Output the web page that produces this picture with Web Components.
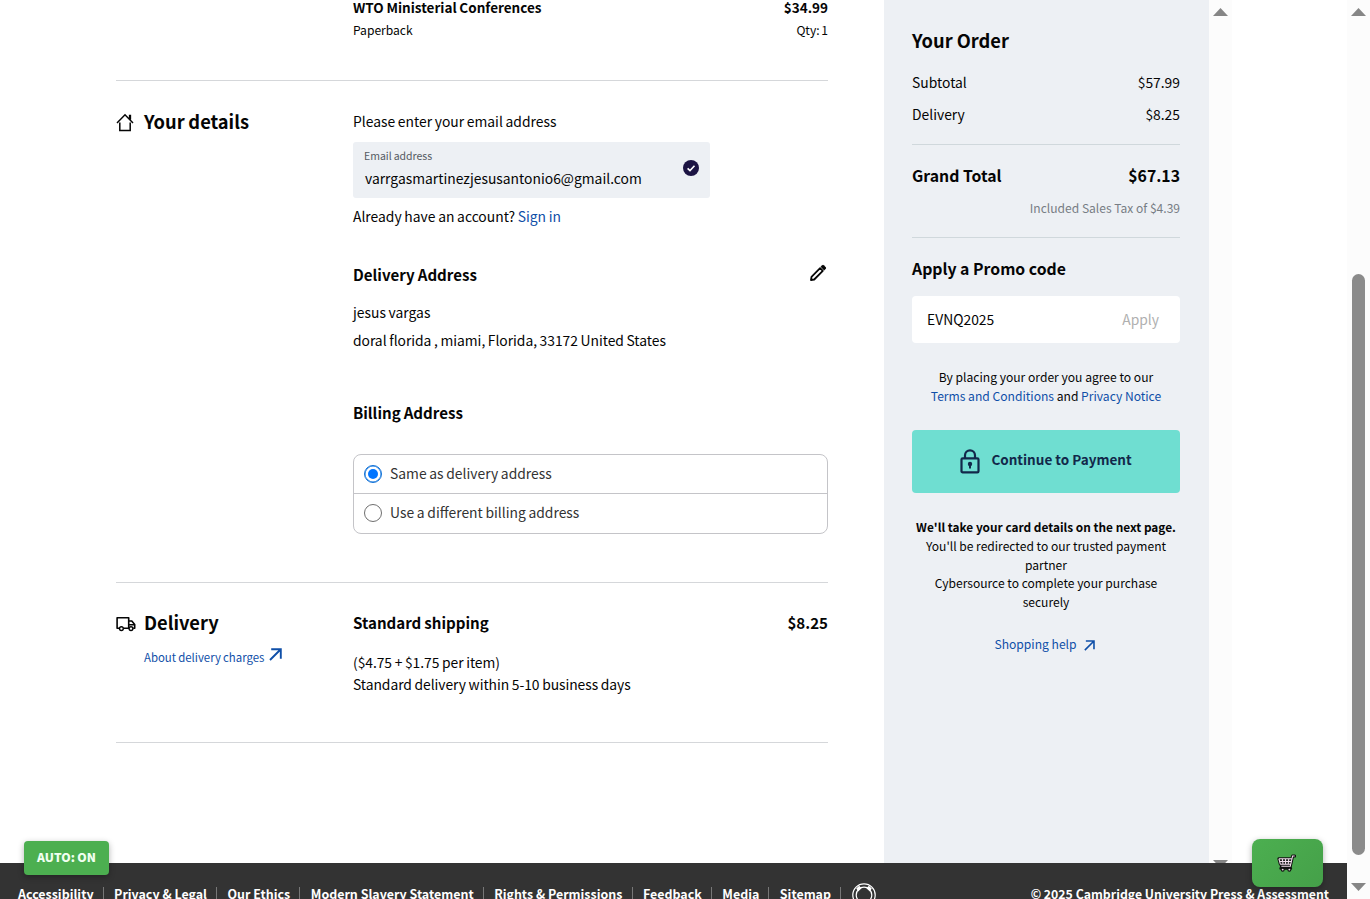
<!DOCTYPE html>
<html lang="en">
<head>
<meta charset="utf-8">
<title>Checkout</title>
<style>
  html, body { margin: 0; height: 100%; overflow: hidden; }
  body {
    background: #fff;
    color: #050505;
    font-family: "Noto Sans CJK SC", "Open Sans", sans-serif;
    font-size: 13.87px;
    font-weight: 400;
    word-spacing: -0.4px;
  }
</style>
</head>
<body>
<checkout-page></checkout-page>

<script>
const ICONS = {
  home: ['0 0 18 19', `<path d="M1 10 9 1.8 17 10M3.8 9.5v8h10.4v-8M13.6 6V2.6h.8v4" fill="none" stroke="currentColor" stroke-width="1.5"/>`],
  truck: ['0 0 20 16', `<path d="M3.6 12.3H1.1V1.7h11.6v10.6H7.4M12.7 5h3.1l2.9 3.6v3.7h-1.5M12.7 8.8h6" fill="none" stroke="currentColor" stroke-width="1.6" stroke-linejoin="round"/><circle cx="5.4" cy="12.6" r="1.9" fill="#fff" stroke="currentColor" stroke-width="1.4"/><circle cx="15" cy="12.6" r="1.9" fill="#fff" stroke="currentColor" stroke-width="1.4"/>`],
  check: ['0 0 16 16', `<circle cx="8" cy="8" r="8" fill="#1c1443"/><path d="M4.6 8.3 7 10.6 11.5 5.8" fill="none" stroke="#fff" stroke-width="1.6"/>`],
  pencil: ['0 0 18 18', `<path d="M2 16l.5-3.2 8.6-8.6 2.7 2.7-8.6 8.6z" fill="none" stroke="currentColor" stroke-width="1.8" stroke-linejoin="round"/><path d="M11.6 2.8 13.2 1.2q.8-.7 1.6 0l2 2q.7.8 0 1.6l-1.6 1.6z" fill="currentColor"/>`],
  arrow: ['0 0 13 13', `<path d="M1 12 11.5 1.5M2.2 1.2h9.6v9.6" fill="none" stroke="currentColor" stroke-width="1.9"/>`],
  lock: ['0 0 20 25', `<rect x="1.5" y="9.4" width="17" height="14" rx="1.2" fill="none" stroke="currentColor" stroke-width="2.2"/><path d="M5 9.2V6.4a5 5 0 0 1 10 0v2.8" fill="none" stroke="currentColor" stroke-width="2.2"/><circle cx="10" cy="15" r="2.2" fill="currentColor"/><path d="M10 15v4.4" stroke="currentColor" stroke-width="2"/>`],
  ring: ['0 0 24 24', `<circle cx="12" cy="12" r="11.2" fill="none" stroke="currentColor" stroke-width="1.2"/><circle cx="12" cy="12" r="7.8" fill="none" stroke="currentColor" stroke-width="1.2"/><path d="M4.2 5.6l3-2.8 2.4 2.4-3.4 3.3zM19.8 5.6l-3-2.8-2.4 2.4 3.4 3.3z" fill="currentColor"/>`],
  cart: ['0 0 20 20', `<path d="M18.6 2.2h-2.2L14 13H4.6M2 5h13.6l-1.4 6H3.6zM4 15h10.4" fill="none" stroke="#111" stroke-width="3.2" stroke-linejoin="round" stroke-linecap="round"/><circle cx="6" cy="16.6" r="2.1" fill="#111"/><circle cx="13" cy="16.6" r="2.1" fill="#111"/><path d="M2 5h13.6l-1.4 6H3.6z" fill="#222"/><path d="M18.6 2.2h-2.2L14 13H4.6M2 5h13.6M2.8 8h12M3.6 10.8h10.6M5.6 5l.8 6M9 5v6M12.4 5l-.6 6M2 5l1.6 6" fill="none" stroke="#efdcea" stroke-width="1.1"/><circle cx="6" cy="16.4" r="1" fill="#efdcea"/><circle cx="13" cy="16.4" r="1" fill="#efdcea"/>`],
};

class UiIcon extends HTMLElement {
  constructor() {
    super();
    this.attachShadow({ mode: "open" });
  }
  connectedCallback() {
    const [box, body] = ICONS[this.getAttribute("name")];
    this.shadowRoot.innerHTML = `
      <style>
        :host { display: block; flex: none; }
        svg { display: block; width: 100%; height: 100%; }
      </style>
      <svg viewBox="${box}">${body}</svg>`;
  }
}
customElements.define("ui-icon", UiIcon);

// One band of the checkout: heading on the left, content on the right
class CheckoutSection extends HTMLElement {
  constructor() {
    super();
    this.attachShadow({ mode: "open" });
    this.shadowRoot.innerHTML = `
      <style>
        :host {
          display: grid;
          grid-template-columns: 237px 1fr;
          border-bottom: 1px solid #d5d7da;
          box-sizing: border-box;
        }
        .body { min-width: 0; }
      </style>
      <div><slot name="heading"></slot></div>
      <div class="body"><slot></slot></div>`;
  }
}
customElements.define("checkout-section", CheckoutSection);

class SectionHeading extends HTMLElement {
  constructor() {
    super();
    this.attachShadow({ mode: "open" });
  }
  connectedCallback() {
    this.shadowRoot.innerHTML = `
      <style>
        :host { display: block; }
        .row { display: flex; align-items: center; height: 24px; }
        h2 { margin: 0; font-size: 18.3px; line-height: 24px; font-weight: 700; }
        .icon { width: 28px; height: 24px; display: flex; align-items: center; }
        .home { width: 18px; height: 19px; margin: 2px 0 0 0; }
        .truck { width: 20px; height: 16px; margin: 3px 0 0 0; }
      </style>
      <div class="row">
        <div class="icon"><ui-icon class="${this.getAttribute("icon")}" name="${this.getAttribute("icon")}"></ui-icon></div>
        <h2>${this.getAttribute("label")}</h2>
      </div>
      <slot></slot>`;
  }
}
customElements.define("section-heading", SectionHeading);

class EmailField extends HTMLElement {
  constructor() {
    super();
    this.attachShadow({ mode: "open" });
  }
  connectedCallback() {
    this.shadowRoot.innerHTML = `
      <style>
        :host {
          display: flex;
          justify-content: space-between;
          box-sizing: border-box;
          width: 357px;
          height: 56px;
          padding: 5px 11px 0 11px;
          border-radius: 3px;
          background: #edf0f4;
        }
        .label { font-size: 10.5px; line-height: 18px; color: #555b63; }
        .value { line-height: 24px; margin: 1px 0 0 1px; }
        ui-icon { width: 16px; height: 16px; margin-top: 13px; }
      </style>
      <div>
        <div class="label">${this.getAttribute("label")}</div>
        <div class="value">${this.getAttribute("value")}</div>
      </div>
      <ui-icon name="check"></ui-icon>`;
  }
}
customElements.define("email-field", EmailField);

class RadioOption extends HTMLElement {
  constructor() {
    super();
    this.attachShadow({ mode: "open" });
    this.shadowRoot.innerHTML = `
      <style>
        :host {
          display: flex;
          align-items: center;
          gap: 8px;
          height: 38px;
          padding-left: 10px;
          color: #333;
        }
        .dot {
          box-sizing: border-box;
          width: 18px;
          height: 18px;
          border: 1px solid #6f6f6f;
          border-radius: 50%;
          display: grid;
          place-items: center;
        }
        :host([checked]) .dot { border: 1px solid #0b6fd8; box-shadow: inset 0 0 0 .5px #0b6fd8; }
        :host([checked]) .dot::after {
          content: "";
          width: 10px;
          height: 10px;
          border-radius: 50%;
          background: #0075ff;
        }
        .text { line-height: 22px; margin-top: -2px; }
      </style>
      <span class="dot"></span>
      <span class="text"><slot></slot></span>`;
  }
}
customElements.define("radio-option", RadioOption);

class PriceRow extends HTMLElement {
  constructor() {
    super();
    this.attachShadow({ mode: "open" });
  }
  connectedCallback() {
    this.shadowRoot.innerHTML = `
      <style>
        :host { display: flex; justify-content: space-between; line-height: 24px; white-space: nowrap; }
      </style>
      <span>${this.getAttribute("label")}</span>
      <span>${this.getAttribute("value")}</span>`;
  }
}
customElements.define("price-row", PriceRow);

class OrderSummary extends HTMLElement {
  constructor() {
    super();
    this.attachShadow({ mode: "open" });
    this.shadowRoot.innerHTML = `
      <style>
        :host {
          display: block;
          box-sizing: border-box;
          padding: 26px 29px 0 28px;
          background: #edf0f4;
          word-spacing: 0;
        }
        h2 { margin: 0 0 16px; font-size: 18.3px; line-height: 28px; font-weight: 700; }
        h3 { margin: 19px 0 15px; font-size: 15.8px; line-height: 24px; font-weight: 700; }
        a { color: #0f4fa8; text-decoration: none; }
        hr { margin: 18px 0 0; border: 0; height: 1px; background: #d0d8dc; }
        .delivery { margin-top: 8px; }
        .total { margin-top: 19px; font-size: 15.8px; font-weight: 700; }
        .tax { margin: 10px 0 19px; font-size: 12.05px; line-height: 20px; text-align: right; color: #777d84; }
        .promo {
          display: flex;
          justify-content: space-between;
          align-items: center;
          box-sizing: border-box;
          height: 47px;
          padding: 0 21px 2px 15px;
          border-radius: 4px;
          background: #fff;
        }
        .apply { color: #b0b0b0; }
        .terms { margin: 24px 0 25px; font-size: 12.1px; line-height: 19px; text-align: center; }
        .pay {
          display: flex;
          justify-content: center;
          align-items: center;
          gap: 11px;
          box-sizing: border-box;
          height: 63px;
          border-radius: 4px;
          background: #6fded1;
          color: #12284a;
          font-size: 13.5px;
          font-weight: 600;
        }
        .pay ui-icon { width: 20px; height: 25px; }
        .pay span { margin-top: -5px; }
        .note { margin: 25px 0 22.5px; font-size: 12.05px; line-height: 18.8px; text-align: center; }
        .note b { font-size: 11.85px; }
        .help { display: flex; justify-content: center; align-items: center; gap: 7px; padding-right: 3px; font-size: 12.1px; line-height: 20px; }
        .help ui-icon { width: 11px; height: 11px; margin-top: 2px; }
      </style>
      <h2>Your Order</h2>
      <price-row label="Subtotal" value="$57.99"></price-row>
      <price-row class="delivery" label="Delivery" value="$8.25"></price-row>
      <hr>
      <price-row class="total" label="Grand Total" value="$67.13"></price-row>
      <div class="tax">Included Sales Tax of $4.39</div>
      <hr style="margin:0">
      <h3>Apply a Promo code</h3>
      <div class="promo"><span>EVNQ2025</span><span class="apply">Apply</span></div>
      <div class="terms">By placing your order you agree to our<br><a href="#">Terms and Conditions</a> and <a href="#">Privacy Notice</a></div>
      <div class="pay"><ui-icon name="lock"></ui-icon><span>Continue to Payment</span></div>
      <div class="note"><b>We'll take your card details on the next page.</b><br>You'll be redirected to our trusted payment<br>partner<br>Cybersource to complete your purchase<br>securely</div>
      <a class="help" href="#">Shopping help <ui-icon name="arrow"></ui-icon></a>`;
  }
}
customElements.define("order-summary", OrderSummary);

class ScrollTrack extends HTMLElement {
  constructor() {
    super();
    this.attachShadow({ mode: "open" });
    this.shadowRoot.innerHTML = `
      <style>
        :host {
          display: flex;
          flex-direction: column;
          align-items: center;
          box-sizing: border-box;
          padding-top: 8px;
          background: #fcfcfc;
          overflow: hidden;
        }
        .up, .down { width: 15px; height: 8px; flex: none; background: #868686; }
        .up { clip-path: polygon(50% 0, 100% 100%, 0 100%); }
        .down { clip-path: polygon(0 0, 100% 0, 50% 100%); margin-top: var(--down-gap); }
        .thumb {
          width: 13px;
          height: var(--thumb, 0px);
          flex: none;
          margin-top: var(--thumb-gap, 0px);
          border-radius: 7px;
          background: #8b8b8b;
        }
      </style>
      <div class="up"></div>
      <div class="thumb"></div>
      <div class="down"></div>`;
  }
}
customElements.define("scroll-track", ScrollTrack);

class SiteFooter extends HTMLElement {
  constructor() {
    super();
    this.attachShadow({ mode: "open" });
    const links = ["Accessibility", "Privacy & Legal", "Our Ethics", "Modern Slavery Statement",
      "Rights & Permissions", "Feedback", "Media", "Sitemap"];
    this.shadowRoot.innerHTML = `
      <style>
        :host {
          display: flex;
          justify-content: space-between;
          align-items: flex-start;
          box-sizing: border-box;
          height: 36px;
          padding: 21px 18px 0;
          overflow: hidden;
          background: #333;
          color: #fff;
          font-size: 12.45px;
          line-height: 20px;
          font-weight: 700;
          white-space: nowrap;
          word-spacing: 0;
        }
        nav { display: flex; }
        nav span::after {
          content: "";
          display: inline-block;
          width: 1px;
          height: 14px;
          margin: 0 10.4px 0 9.2px;
          background: #777;
          vertical-align: -2px;
        }
        .copy { font-size: 12.3px; }
        ui-icon { width: 24px; height: 24px; margin-top: -1px; }
      </style>
      <nav>${links.map(l => `<span>${l.replace("&", "&amp;")}</span>`).join("")}<ui-icon name="ring"></ui-icon></nav>
      <div class="copy">© 2025 Cambridge University Press &amp; Assessment</div>`;
  }
}
customElements.define("site-footer", SiteFooter);

class CheckoutPage extends HTMLElement {
  constructor() {
    super();
    this.attachShadow({ mode: "open" });
    this.shadowRoot.innerHTML = `
      <style>
        :host { display: grid; grid-template-columns: 1347px 23px; height: 899px; }
        .content { display: grid; grid-template-rows: 863px 36px; }
        .cols {
          display: grid;
          grid-template-columns: 712px 56px 325px 23px;
          padding-left: 116px;
          overflow: hidden;
        }
        order-summary { grid-column: 3; }
        a { color: #0f4fa8; text-decoration: none; }
        p { margin: 0; line-height: 24px; }
        .row { display: flex; justify-content: space-between; }
        .item { height: 81px; }
        .item .title { font-size: 13.5px; font-weight: 700; line-height: 16px; margin-top: -1px; }
        .item .meta { font-size: 12.1px; line-height: 20px; margin-top: 5px; word-spacing: -1px; }
        .details { padding: 28px 0 48px; }
        email-field { margin: 9px 0 6px; }
        h3 { margin: 0; font-size: 15.1px; line-height: 24px; font-weight: 700; }
        .address { margin: 34px 0 14px; }
        .address ui-icon { width: 18px; height: 18px; margin: 2px 1px 0 0; }
        .street { margin-top: 4px; letter-spacing: -0.04px; }
        .billing { margin: 48px 0 30px; }
        .choices { box-sizing: border-box; height: 80px; border: 1px solid #c4c4c8; border-radius: 8px; }
        .choices radio-option + radio-option { border-top: 1px solid #c4c4c8; }
        .shipping { padding: 27px 0 47px; }
        .shipping p { line-height: 22px; letter-spacing: -0.05px; }
        .shipping .row { margin-bottom: 17px; }
        .about { display: flex; gap: 5px; margin: 13px 0 0 28px; font-size: 11.4px; line-height: 20px; }
        .about ui-icon { width: 13px; height: 13px; margin-top: 1px; }
        .auto, .basket {
          position: absolute;
          display: grid;
          place-items: center;
          background: #4caf50;
          color: #fff;
          box-shadow: 0 2px 6px rgba(0,0,0,.3);
        }
        .auto { left: 24px; top: 841px; width: 85px; height: 34px; border-radius: 4px; font-size: 12px; font-weight: 900; line-height: 32px; align-items: start; color: #f1fff1; }
        .basket { left: 1252px; top: 839px; width: 71px; height: 48px; border-radius: 8px; background: linear-gradient(135deg, #4caf50, #45a049); }
        .basket ui-icon { width: 19px; height: 19px; margin-right: 2px; }
      </style>
      <div class="content">
        <div class="cols">
          <main>
            <checkout-section class="item">
              <div class="row title"><span>WTO Ministerial Conferences</span><span>$34.99</span></div>
              <div class="row meta"><span>Paperback</span><span>Qty: 1</span></div>
            </checkout-section>
            <checkout-section class="details">
              <section-heading slot="heading" icon="home" label="Your details"></section-heading>
              <p>Please enter your email address</p>
              <email-field label="Email address" value="varrgasmartinezjesusantonio6@gmail.com"></email-field>
              <p>Already have an account? <a href="#">Sign in</a></p>
              <div class="row address"><h3>Delivery Address</h3><ui-icon name="pencil"></ui-icon></div>
              <p>jesus vargas</p>
              <p class="street">doral florida , miami, Florida, 33172 United States</p>
              <h3 class="billing">Billing Address</h3>
              <div class="choices">
                <radio-option checked>Same as delivery address</radio-option>
                <radio-option>Use a different billing address</radio-option>
              </div>
            </checkout-section>
            <checkout-section class="shipping">
              <section-heading slot="heading" icon="truck" label="Delivery">
                <a class="about" href="#">About delivery charges <ui-icon name="arrow"></ui-icon></a>
              </section-heading>
              <div class="row"><h3>Standard shipping</h3><h3>$8.25</h3></div>
              <p>($4.75 + $1.75 per item)</p>
              <p>Standard delivery within 5-10 business days</p>
            </checkout-section>
          </main>
          <order-summary></order-summary>
          <scroll-track style="--down-gap: 844px"></scroll-track>
        </div>
        <site-footer></site-footer>
      </div>
      <scroll-track style="--thumb-gap: 258px; --thumb: 581px; --down-gap: 28px"></scroll-track>
      <div class="auto">AUTO: ON</div>
      <div class="basket"><ui-icon name="cart"></ui-icon></div>`;
  }
}
customElements.define("checkout-page", CheckoutPage);
</script>
</body>
</html>
